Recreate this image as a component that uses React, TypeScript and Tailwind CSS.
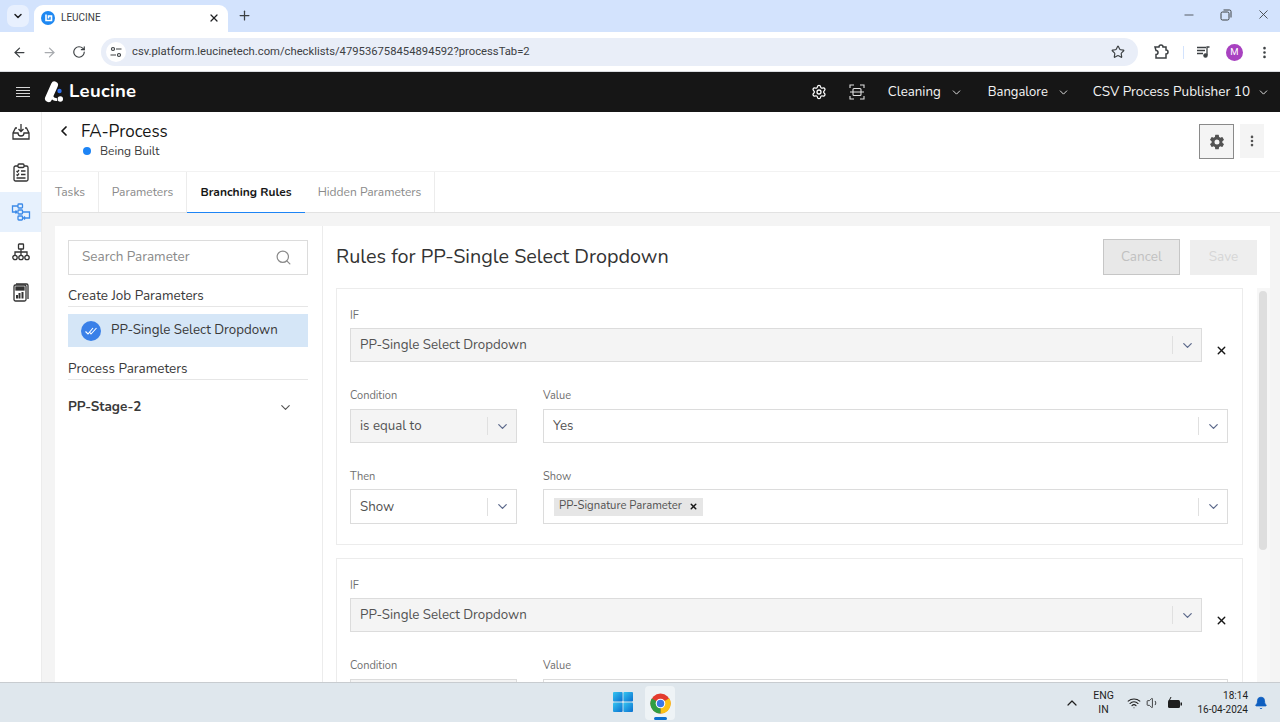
import React from "react";
import {
  ArrowLeft, ArrowRight, RotateCw, Star, X, Plus, Minus, ChevronDown, ChevronLeft, ChevronUp, Search, EllipsisVertical, Wifi, Volume1, Bell, Settings,
} from "lucide-react";
import { IoSettingsSharp } from "react-icons/io5";

const appFont = "font-['Nunito','Lato','Noto_Sans',sans-serif]";

function Label({ children }: { children: React.ReactNode }) {
  return <div className="h-[14px] text-[11px] leading-[16px] text-[#6f6f6f]">{children}</div>;
}

function Select({ children, w, disabled, tall }: { children?: React.ReactNode; w: string; disabled?: boolean; tall?: boolean }) {
  return (
    <div className={`${w} ${tall ? "h-[35px]" : "h-[34px]"} shrink-0 flex items-center border border-[#dcdcdc] ${disabled ? "bg-[#f4f4f4]" : "bg-white"}`}>
      <div className="flex-1 min-w-0 pl-[9px] pt-[2px] text-[13.3px] text-[#525252] flex items-center">{children}</div>
      <div className="w-px h-[18px] bg-[#e0e0e0]" />
      <div className="w-[28px] flex justify-center">
        <ChevronDown size={15} strokeWidth={2} className="text-[#5d6a8c]" />
      </div>
    </div>
  );
}

function Rule({ full }: { full?: boolean }) {
  return (
    <div className="border border-[#ececec] mb-[13px] pl-[13px] pr-[13px] pt-[19px] pb-[20px] shrink-0">
      <Label>IF</Label>
      <div className="flex items-center mt-[6px]">
        <Select w="w-[852px]" disabled>PP-Single Select Dropdown</Select>
        <X size={13} strokeWidth={2.5} className="text-[#161616] ml-[13px] mt-[11px]" />
      </div>
      <div className="flex gap-[26px] mt-[26px]">
        <div>
          <Label>Condition</Label>
          <div className="mt-[7px]"><Select w="w-[167px]" disabled>{full && "is equal to"}</Select></div>
        </div>
        <div>
          <Label>Value</Label>
          <div className="mt-[7px]"><Select w="w-[685px]">{full && "Yes"}</Select></div>
        </div>
      </div>
      {full && (
        <div className="flex gap-[26px] mt-[26px]">
          <div>
            <Label>Then</Label>
            <div className="mt-[6px]"><Select w="w-[167px]" tall>Show</Select></div>
          </div>
          <div>
            <Label>Show</Label>
            <div className="mt-[6px]">
              <Select w="w-[685px]" tall>
                <span className="flex items-center h-[18px] -mt-[2px] ml-px bg-[#e6e6e6] pl-[5px] pr-[5px] text-[11.3px] text-[#525252]">
                  PP-Signature Parameter
                  <X size={9} strokeWidth={4} className="ml-[7px] text-[#161616]" />
                </span>
              </Select>
            </div>
          </div>
        </div>
      )}
    </div>
  );
}

function ChromeLogo() {
  return (
    <svg width="21" height="21" viewBox="0 0 48 48">
      <circle cx="24" cy="24" r="23" fill="#e33b2e" />
      <path d="M24 24 L44 12 A23 23 0 0 1 24 47 Z" fill="#fbc116" />
      <path d="M24 24 L24 47 A23 23 0 0 1 4 12.5 Z" fill="#2f9e44" />
      <circle cx="24" cy="24" r="11" fill="#fff" />
      <circle cx="24" cy="24" r="8.5" fill="#3b78e7" />
    </svg>
  );
}

function WinLogo() {
  return (
    <svg width="20" height="20" viewBox="0 0 20 20">
      <defs>
        <linearGradient id="w" x1="0" y1="0" x2="1" y2="1">
          <stop offset="0" stopColor="#35c5f0" />
          <stop offset="1" stopColor="#0a6fd0" />
        </linearGradient>
      </defs>
      <rect x="0" y="0" width="9.6" height="9.6" rx="1" fill="url(#w)" />
      <rect x="10.4" y="0" width="9.6" height="9.6" rx="1" fill="url(#w)" />
      <rect x="0" y="10.4" width="9.6" height="9.6" rx="1" fill="url(#w)" />
      <rect x="10.4" y="10.4" width="9.6" height="9.6" rx="1" fill="url(#w)" />
    </svg>
  );
}

function SideIcon({ children, active }: { children: React.ReactNode; active?: boolean }) {
  return (
    <div className={`h-[40px] flex items-center justify-center ${active ? "bg-[#e7f1fd]" : ""}`}>{children}</div>
  );
}

export default function App() {
  return (
    <div className="w-[1280px] h-[722px] overflow-hidden flex flex-col bg-white font-['Roboto','Noto_Sans',sans-serif]">
      {/* tab strip */}
      <div className="h-[32px] bg-[#d3e3fd] flex items-end shrink-0 relative">
        <div className="w-[22px] h-[22px] ml-[7px] mb-[5px] rounded-[7px] bg-[#e8f0fe] flex items-center justify-center">
          <ChevronDown size={12} strokeWidth={3} className="text-[#202124]" />
        </div>
        <div className="w-[194px] h-[28px] ml-[5px] -mb-px pb-[3px] bg-white rounded-t-[9px] flex items-center pl-[7px] pr-[8px]">
          <svg width="14" height="14" viewBox="0 0 14 14" className="shrink-0">
            <circle cx="7" cy="7" r="7" fill="#1e88f2" />
            <path d="M5 3.5 V9.5 H10.5 V5 H7.5 V7.5" fill="none" stroke="#fff" strokeWidth="1.6" />
          </svg>
          <span className="ml-[6px] text-[10px] text-[#3c4043] flex-1">LEUCINE</span>
          <X size={12} strokeWidth={2.5} className="text-[#202124]" />
        </div>
        <Plus size={15} strokeWidth={2} className="ml-[9px] mb-[9px] text-[#3c4043]" />
        <div className="flex-1" />
        <div className="flex items-center gap-[24px] pr-[9px] mb-[10px] text-[#3c4043]">
          <Minus size={14} strokeWidth={1.4} />
          <svg width="12" height="12" viewBox="0 0 12 12" fill="none" stroke="currentColor" strokeWidth="1">
            <rect x="1" y="3" width="8" height="8" rx="1.5" />
            <path d="M3.5 1 H9.5 A1.5 1.5 0 0 1 11 2.5 V8.5" />
          </svg>
          <X size={15} strokeWidth={1.4} />
        </div>
      </div>

      {/* address bar */}
      <div className="h-[40px] pt-[1px] bg-white border-b border-[#dadce0] flex items-center shrink-0">
        <ArrowLeft size={15} strokeWidth={2} className="ml-[12px] text-[#3c4043]" />
        <ArrowRight size={15} strokeWidth={2} className="ml-[15px] text-[#a8abaf]" />
        <RotateCw size={14} strokeWidth={2} className="ml-[15px] text-[#3c4043]" />
        <div className="ml-[15px] w-[1037px] h-[28px] rounded-full bg-[#e9eef8] flex items-center pl-[5px]">
          <div className="w-[20px] h-[20px] rounded-full bg-white flex items-center justify-center shrink-0">
            <svg width="12" height="12" viewBox="0 0 12 12" fill="none" stroke="#3c4043" strokeWidth="1.2">
              <circle cx="3" cy="3" r="1.5" />
              <path d="M6 3 H11.5 M0.5 9 H6" />
              <circle cx="9" cy="9" r="1.5" />
            </svg>
          </div>
          <span className="ml-[6px] text-[11.25px] text-[#3c4043] flex-1">csv.platform.leucinetech.com/checklists/479536758454894592?processTab=2</span>
          <Star size={14} strokeWidth={2} className="mr-[13px] text-[#3c4043]" />
        </div>
        <svg width="16" height="16" viewBox="0 0 16 16" fill="none" stroke="#3c4043" strokeWidth="1.5" className="ml-[15px]">
          <path d="M2 3 H6 A2 2 0 0 1 10 3 H13 V6 A2 2 0 0 1 13 10 V14 H3 V10.5 A2 2 0 0 0 3 6.5 Z" />
        </svg>
        <div className="ml-[14px] w-px h-[13px] bg-[#d3e3fd]" />
        <svg width="14" height="12" viewBox="0 0 14 12" fill="none" stroke="#3c4043" strokeWidth="1.3" className="ml-[13px]">
          <path d="M0 1.5 H9 M0 4.5 H8 M0 7.5 H6 M12.5 1 H10 V9" />
          <circle cx="8.5" cy="9.5" r="1.6" fill="#3c4043" />
        </svg>
        <div className="ml-[15px] w-[17px] h-[17px] rounded-full bg-[#a842c0] text-white text-[9.5px] flex items-center justify-center">M</div>
        <EllipsisVertical size={15} strokeWidth={2.2} className="ml-[14px] text-[#3c4043]" />
      </div>

      {/* app nav */}
      <div className={`h-[40px] bg-[#161616] flex items-center shrink-0 text-[#f4f4f4] ${appFont}`}>
        <svg width="14" height="11" viewBox="0 0 14 11" stroke="#d6d6d6" strokeWidth="1" className="ml-[16px]">
          <path d="M0 .5 H14 M0 3.5 H14 M0 6.5 H14 M0 9.5 H14" />
        </svg>
        <svg width="20" height="22" viewBox="0 0 20 22" className="ml-[14px]">
          <path d="M10.5 4 L4.5 17.5" stroke="#fff" strokeWidth="7" strokeLinecap="round" fill="none" />
          <path d="M8 16 Q10 19 13 18.5" stroke="#fff" strokeWidth="3" fill="none" />
          <circle cx="16.3" cy="18" r="2.7" fill="#fff" />
          <circle cx="15.5" cy="10" r="2.2" fill="#2f6fed" />
        </svg>
        <span className="ml-[5px] text-[18.5px] font-bold tracking-[0.3px] text-white">Leucine</span>
        <div className="flex-1" />
        <Settings size={16} strokeWidth={1.9} className="text-white mr-[22px]" />
        <svg width="16" height="16" viewBox="0 0 16 16" fill="none" stroke="#e0e0e0" strokeWidth="1.1" className="mr-[23px]">
          <path d="M1 4 V1 H5 M11 1 H15 V4 M1 12 V15 H5 M11 15 H15 V12 M1 8 H15" />
          <rect x="4" y="4.5" width="8" height="7" rx="1" />
        </svg>
        <span className="pt-[1px] text-[13.3px]">Cleaning</span>
        <ChevronDown size={13} strokeWidth={1.8} className="ml-[9px] mr-[25px] text-[#e0e0e0]" />
        <span className="pt-[1px] text-[13px]">Bangalore</span>
        <ChevronDown size={13} strokeWidth={1.8} className="ml-[9px] mr-[23px] text-[#e0e0e0]" />
        <span className="text-[13.5px]">CSV Process Publisher 10</span>
        <ChevronDown size={13} strokeWidth={1.8} className="ml-[7px] mr-[10px] text-[#e0e0e0]" />
      </div>

      {/* main */}
      <div className={`flex-1 min-h-0 flex overflow-hidden ${appFont}`}>
        <div className="w-[42px] shrink-0 border-r border-[#ececec] flex flex-col text-[#262626]">
          <SideIcon>
            <svg width="18" height="18" viewBox="0 0 18 18" fill="none" stroke="#333" strokeWidth="1.3">
              <path d="M5 5 H3.5 L1 10 V16 H17 V10 L14.5 5 H13 M1 10 H6 Q6 13 9 13 Q12 13 12 10 H17 M9 1 V8 M6.5 6 L9 8.5 L11.5 6" />
            </svg>
          </SideIcon>
          <SideIcon>
            <svg width="16" height="19" viewBox="0 0 16 19" fill="none" stroke="#333" strokeWidth="1.3">
              <rect x="1" y="3" width="14" height="15" rx="1.5" />
              <rect x="5" y="1" width="6" height="3.5" rx="1" fill="#fff" />
              <path d="M3.5 8 L4.5 9 L6 7 M8 8 H12.5 M3.5 11.5 L4.5 12.5 L6 10.5 M8 11.5 H12.5 M3.5 15 H12.5" />
            </svg>
          </SideIcon>
          <SideIcon active>
            <svg width="20" height="18" viewBox="0 0 20 18" fill="none" stroke="#3c8ae8" strokeWidth="1.3">
              <rect x="7" y="1" width="4.5" height="4" rx=".8" />
              <rect x="7" y="7" width="4.5" height="4" rx=".8" />
              <rect x="7" y="13" width="4.5" height="4" rx=".8" />
              <path d="M7 3 H1.5 V9 H6 M4.5 7.5 L6 9 L4.5 10.5 M11.5 9 H18.5 V15 H12.5 M14 13.5 L12.5 15 L14 16.5" />
            </svg>
          </SideIcon>
          <SideIcon>
            <svg width="18" height="18" viewBox="0 0 18 18" fill="none" stroke="#333" strokeWidth="1.3">
              <rect x="6.5" y="1" width="5" height="5" rx=".6" />
              <path d="M9 6 V12 M3 12 V9 H15 V12" />
              <circle cx="3" cy="14.5" r="2.2" />
              <circle cx="9" cy="14.5" r="2.2" />
              <circle cx="15" cy="14.5" r="2.2" />
            </svg>
          </SideIcon>
          <SideIcon>
            <svg width="16" height="19" viewBox="0 0 16 19" fill="none" stroke="#333" strokeWidth="1.3">
              <rect x="1" y="2" width="12" height="16" rx="1.5" />
              <path d="M3 1 H13.5 A1.5 1.5 0 0 1 15 2.5 V16" />
              <rect x="3" y="4" width="8" height="3" fill="#333" />
              <path d="M4 15.5 V12 M6.5 15.5 V10 M9.5 15.5 V9" strokeWidth="2" />
            </svg>
          </SideIcon>
        </div>

        <div className="flex-1 min-w-0 flex flex-col">
          {/* header */}
          <div className="h-[60px] shrink-0 border-b border-[#f2f2f2] flex items-start relative">
            <ChevronLeft size={16} strokeWidth={2.6} className="ml-[14px] mt-[11px] text-[#161616]" />
            <div className="ml-[9px] mt-[10px]">
              <div className="text-[17px] leading-[20px] text-[#161616]">FA-Process</div>
              <div className="flex items-center mt-[1px]">
                <span className="w-[8px] h-[8px] rounded-full bg-[#1d84f5] ml-[2px]" />
                <span className="ml-[9px] text-[12px] leading-[16px] text-[#393939]">Being Built</span>
              </div>
            </div>
            <div className="flex-1" />
            <div className="w-[35px] h-[35px] mt-[12px] bg-[#f4f4f4] border border-[#8a8a8a] flex items-center justify-center">
              <IoSettingsSharp size={16} className="text-[#525252]" />
            </div>
            <div className="w-[24px] h-[34px] mt-[12px] ml-[6px] mr-[16px] bg-[#f4f4f4] flex items-center justify-center">
              <EllipsisVertical size={14} strokeWidth={2.5} className="text-[#525252]" />
            </div>
          </div>

          {/* tabs */}
          <div className="h-[41px] shrink-0 flex border-b border-[#e2e2e2] text-[12px] text-[#8a8a8a]">
            <div className="w-[57px] flex items-center justify-center border-r border-[#ececec]">Tasks</div>
            <div className="w-[88px] flex items-center justify-center border-r border-[#ececec]">Parameters</div>
            <div className="w-[118px] -mb-px flex items-center justify-center border-b border-[#1d84f5] font-bold text-[#161616]">Branching Rules</div>
            <div className="w-[130px] flex items-center justify-center border-r border-[#ececec]">Hidden Parameters</div>
          </div>

          {/* body */}
          <div className="flex-1 min-h-0 bg-[#f4f4f4] pl-[13px] pr-[10px] pt-[13px]">
            <div className="h-full bg-white flex overflow-hidden">
              {/* left */}
              <div className="w-[268px] shrink-0 border-r border-[#ececec] pl-[13px] pr-[14px] pt-[14px]">
                <div className="h-[35px] border border-[#dcdcdc] flex items-center pl-[13px] pr-[15px] text-[13.5px] text-[#8a8a8a]">
                  <span className="flex-1">Search Parameter</span>
                  <Search size={17} strokeWidth={1.7} className="text-[#8a8a8a]" />
                </div>
                <div className="mt-[11px] h-[20px] text-[13.5px] leading-[20px] text-[#393939]">Create Job Parameters</div>
                <div className="h-[1px] bg-[#e6e6e6]" />
                <div className="mt-[7px] h-[33px] pt-[1px] bg-[#d5e6f7] flex items-center pl-[13px] text-[13.3px] text-[#393939]">
                  <span className="w-[20px] h-[20px] rounded-full bg-[#3a80e8] flex items-center justify-center">
                    <svg width="12" height="8" viewBox="0 0 12 8" fill="none" stroke="#fff" strokeWidth="1.1">
                      <path d="M.5 4.5 L3 7 L8 1 M4.5 5 L6 7 L11.5 1" />
                    </svg>
                  </span>
                  <span className="ml-[10px]">PP-Single Select Dropdown</span>
                </div>
                <div className="mt-[12px] h-[20px] text-[13.5px] leading-[20px] text-[#393939]">Process Parameters</div>
                <div className="h-[1px] bg-[#e6e6e6]" />
                <div className="mt-[17px] flex items-center justify-between pr-[15px] text-[13.5px] font-bold text-[#393939]">
                  PP-Stage-2
                  <ChevronDown size={15} strokeWidth={1.8} className="text-[#525252]" />
                </div>
              </div>

              {/* right */}
              <div className="flex-1 min-w-0 flex flex-col pl-[13px] pt-[13px]">
                <div className="h-[36px] shrink-0 flex items-center pr-[13px]">
                  <div className="text-[19.8px] text-[#333] flex-1">Rules for PP-Single Select Dropdown</div>
                  <div className="w-[77px] h-[36px] bg-[#e8e8e8] border border-[#c6c6c6] flex items-center justify-center text-[13.5px] text-[#c0c0c0]">Cancel</div>
                  <div className="w-[67px] h-[35px] ml-[10px] bg-[#eeeeee] flex items-center justify-center text-[13.5px] text-[#d6d6d6]">Save</div>
                </div>
                <div className="flex-1 min-h-0 flex mt-[13px]">
                  <div className="w-[907px] shrink-0 flex flex-col">
                    <Rule full />
                    <Rule />
                  </div>
                  <div className="ml-[14px] w-[13px] bg-[#f7f7f7] pt-[3px] pl-[2px]">
                    <div className="w-[8px] h-[259px] rounded-full bg-[#dedede]" />
                  </div>
                </div>
              </div>
            </div>
          </div>
        </div>
      </div>

      {/* taskbar */}
      <div className="h-[40px] shrink-0 bg-[#dfe7ed] border-t border-[#c8ccd0] flex items-center relative text-[#1f1f1f]">
        <div className="absolute left-[613px] top-[9px]"><WinLogo /></div>
        <div className="absolute left-[645px] top-[3px] w-[30px] h-[34px] rounded-[4px] bg-[#eef3f6] flex items-center justify-center">
          <ChromeLogo />
          <div className="absolute bottom-0 left-[9px] w-[13px] h-[3px] rounded-sm bg-[#0a6fd0]" />
        </div>
        <div className="flex-1" />
        <ChevronUp size={16} strokeWidth={1.8} className="mr-[7px]" />
        <div className="w-[34px] text-center text-[10.5px] leading-[13.5px] mr-[6px]">ENG<br />IN</div>
        <Wifi size={14} strokeWidth={1.8} className="mr-[5px]" />
        <Volume1 size={14} strokeWidth={1.4} className="mr-[7px]" />
        <svg width="16" height="12" viewBox="0 0 16 12" className="mr-[15px]">
          <rect x="1" y="3" width="12" height="8" rx="1.5" fill="#1f1f1f" />
          <rect x="13.5" y="5.5" width="1.5" height="3" fill="#1f1f1f" />
          <path d="M4 0 L2 4 H4 L3 7" stroke="#1f1f1f" strokeWidth="1" fill="none" />
        </svg>
        <div className="text-right text-[10px] leading-[13.5px] mr-[6px]">18:14<br />16-04-2024</div>
        <Bell size={14} fill="#0f5fc0" strokeWidth={1.5} className="text-[#0f5fc0] mr-[12px]" />
      </div>
    </div>
  );
}
